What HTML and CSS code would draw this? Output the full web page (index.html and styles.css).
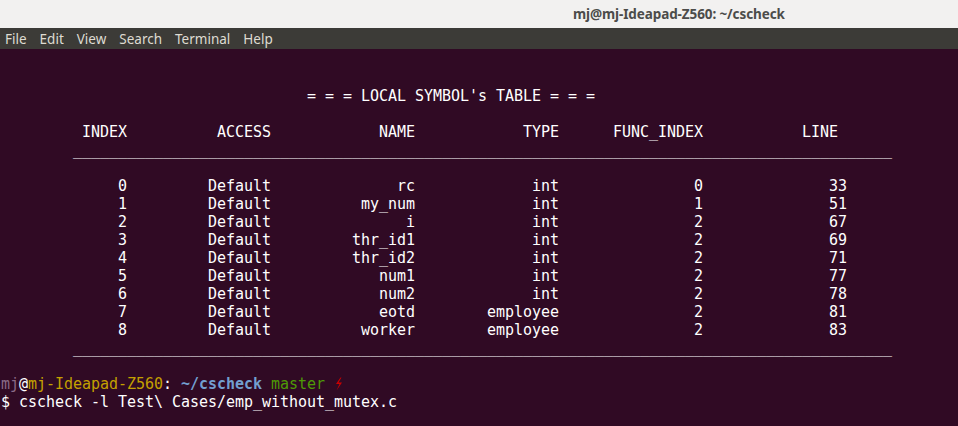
FILE: index.html
```html
<!DOCTYPE html>
<html>
<head>
<meta charset="utf-8">
<link rel="stylesheet" href="styles.css">
</head>
<body>
<div class="window">
  <div class="titlebar"><span class="title">mj@mj-Ideapad-Z560: ~/cscheck</span></div>
  <div class="menubar">
    <span>File</span><span>Edit</span><span>View</span><span>Search</span><span>Terminal</span><span>Help</span>
  </div>
  <div class="term">
    <div class="line"></div>
    <div class="line"></div>
    <div class="line heading">= = = LOCAL SYMBOL's TABLE = = =</div>
    <div class="line"></div>
    <div class="line grid head">
      <span>INDEX</span><span>ACCESS</span><span>NAME</span><span>TYPE</span><span>FUNC_INDEX</span><span class="last">LINE</span>
    </div>
    <div class="line rule">___________________________________________________________________________________________</div>
    <div class="line"></div>
    <div class="line grid"><span>0</span><span>Default</span><span>rc</span><span>int</span><span>0</span><span>33</span></div>
    <div class="line grid"><span>1</span><span>Default</span><span>my_num</span><span>int</span><span>1</span><span>51</span></div>
    <div class="line grid"><span>2</span><span>Default</span><span>i</span><span>int</span><span>2</span><span>67</span></div>
    <div class="line grid"><span>3</span><span>Default</span><span>thr_id1</span><span>int</span><span>2</span><span>69</span></div>
    <div class="line grid"><span>4</span><span>Default</span><span>thr_id2</span><span>int</span><span>2</span><span>71</span></div>
    <div class="line grid"><span>5</span><span>Default</span><span>num1</span><span>int</span><span>2</span><span>77</span></div>
    <div class="line grid"><span>6</span><span>Default</span><span>num2</span><span>int</span><span>2</span><span>78</span></div>
    <div class="line grid"><span>7</span><span>Default</span><span>eotd</span><span>employee</span><span>2</span><span>81</span></div>
    <div class="line grid"><span>8</span><span>Default</span><span>worker</span><span>employee</span><span>2</span><span>83</span></div>
    <div class="line rule">___________________________________________________________________________________________</div>
    <div class="line"></div>
    <div class="line prompt"><span class="user">mj</span>@<span class="host">mj-Ideapad-Z560</span>: <span class="path">~/cscheck</span> <span class="branch">master</span> <svg class="bolt" width="9" height="14" viewBox="0 0 9 14"><path d="M6.5 0.5 L2 7 L5.5 7 L2.5 13.5 L8 5.5 L4.5 5.5 L7.5 0.5 Z" fill="#cc0000"/></svg></div>
    <div class="line">$ cscheck -l Test\ Cases/emp_without_mutex.c</div>
  </div>
</div>
</body>
</html>
```
FILE: styles.css
```css
html, body {
  margin: 0;
  padding: 0;
  background: #300a24;
}
.window {
  width: 958px;
  height: 426px;
  overflow: hidden;
  display: flex;
  flex-direction: column;
}
.titlebar {
  height: 28px;
  background: #f2f1f0;
  display: flex;
  align-items: center;
  padding-left: 573px;
  box-sizing: border-box;
}
.title {
  font-family: "Noto Sans", "DejaVu Sans", sans-serif;
  font-weight: 700;
  font-size: 13.5px;
  color: #4c4c4a;
  letter-spacing: -0.1px;
}
.menubar {
  height: 21px;
  background: #3c3b37;
  display: flex;
  align-items: center;
  gap: 13px;
  padding-left: 5px;
  font-family: "Noto Sans", "DejaVu Sans", sans-serif;
  font-size: 13.5px;
  color: #dfdbd2;
}
.term {
  flex: 1;
  background: #300a24;
  padding: 2px 0 0 1px;
  font-family: "DejaVu Sans Mono", monospace;
  font-size: 15px;
  letter-spacing: -0.03px;
  line-height: 18px;
  color: #ffffff;
}
.line {
  height: 18px;
  white-space: pre;
}
.heading {
  padding-left: 306px;
}
.grid {
  display: grid;
  grid-template-columns: 126px 144px 144px 144px 144px 144px;
}
.grid span {
  text-align: right;
}
.head .last {
  padding-right: 9px;
}
.rule {
  padding-left: 72px;
}
.user { color: #8a6a87; }
.host { color: #c4a000; }
.path { color: #729fcf; font-weight: 700; }
.branch { color: #4e9a06; }
.bolt {
  vertical-align: -2px;
}
```
